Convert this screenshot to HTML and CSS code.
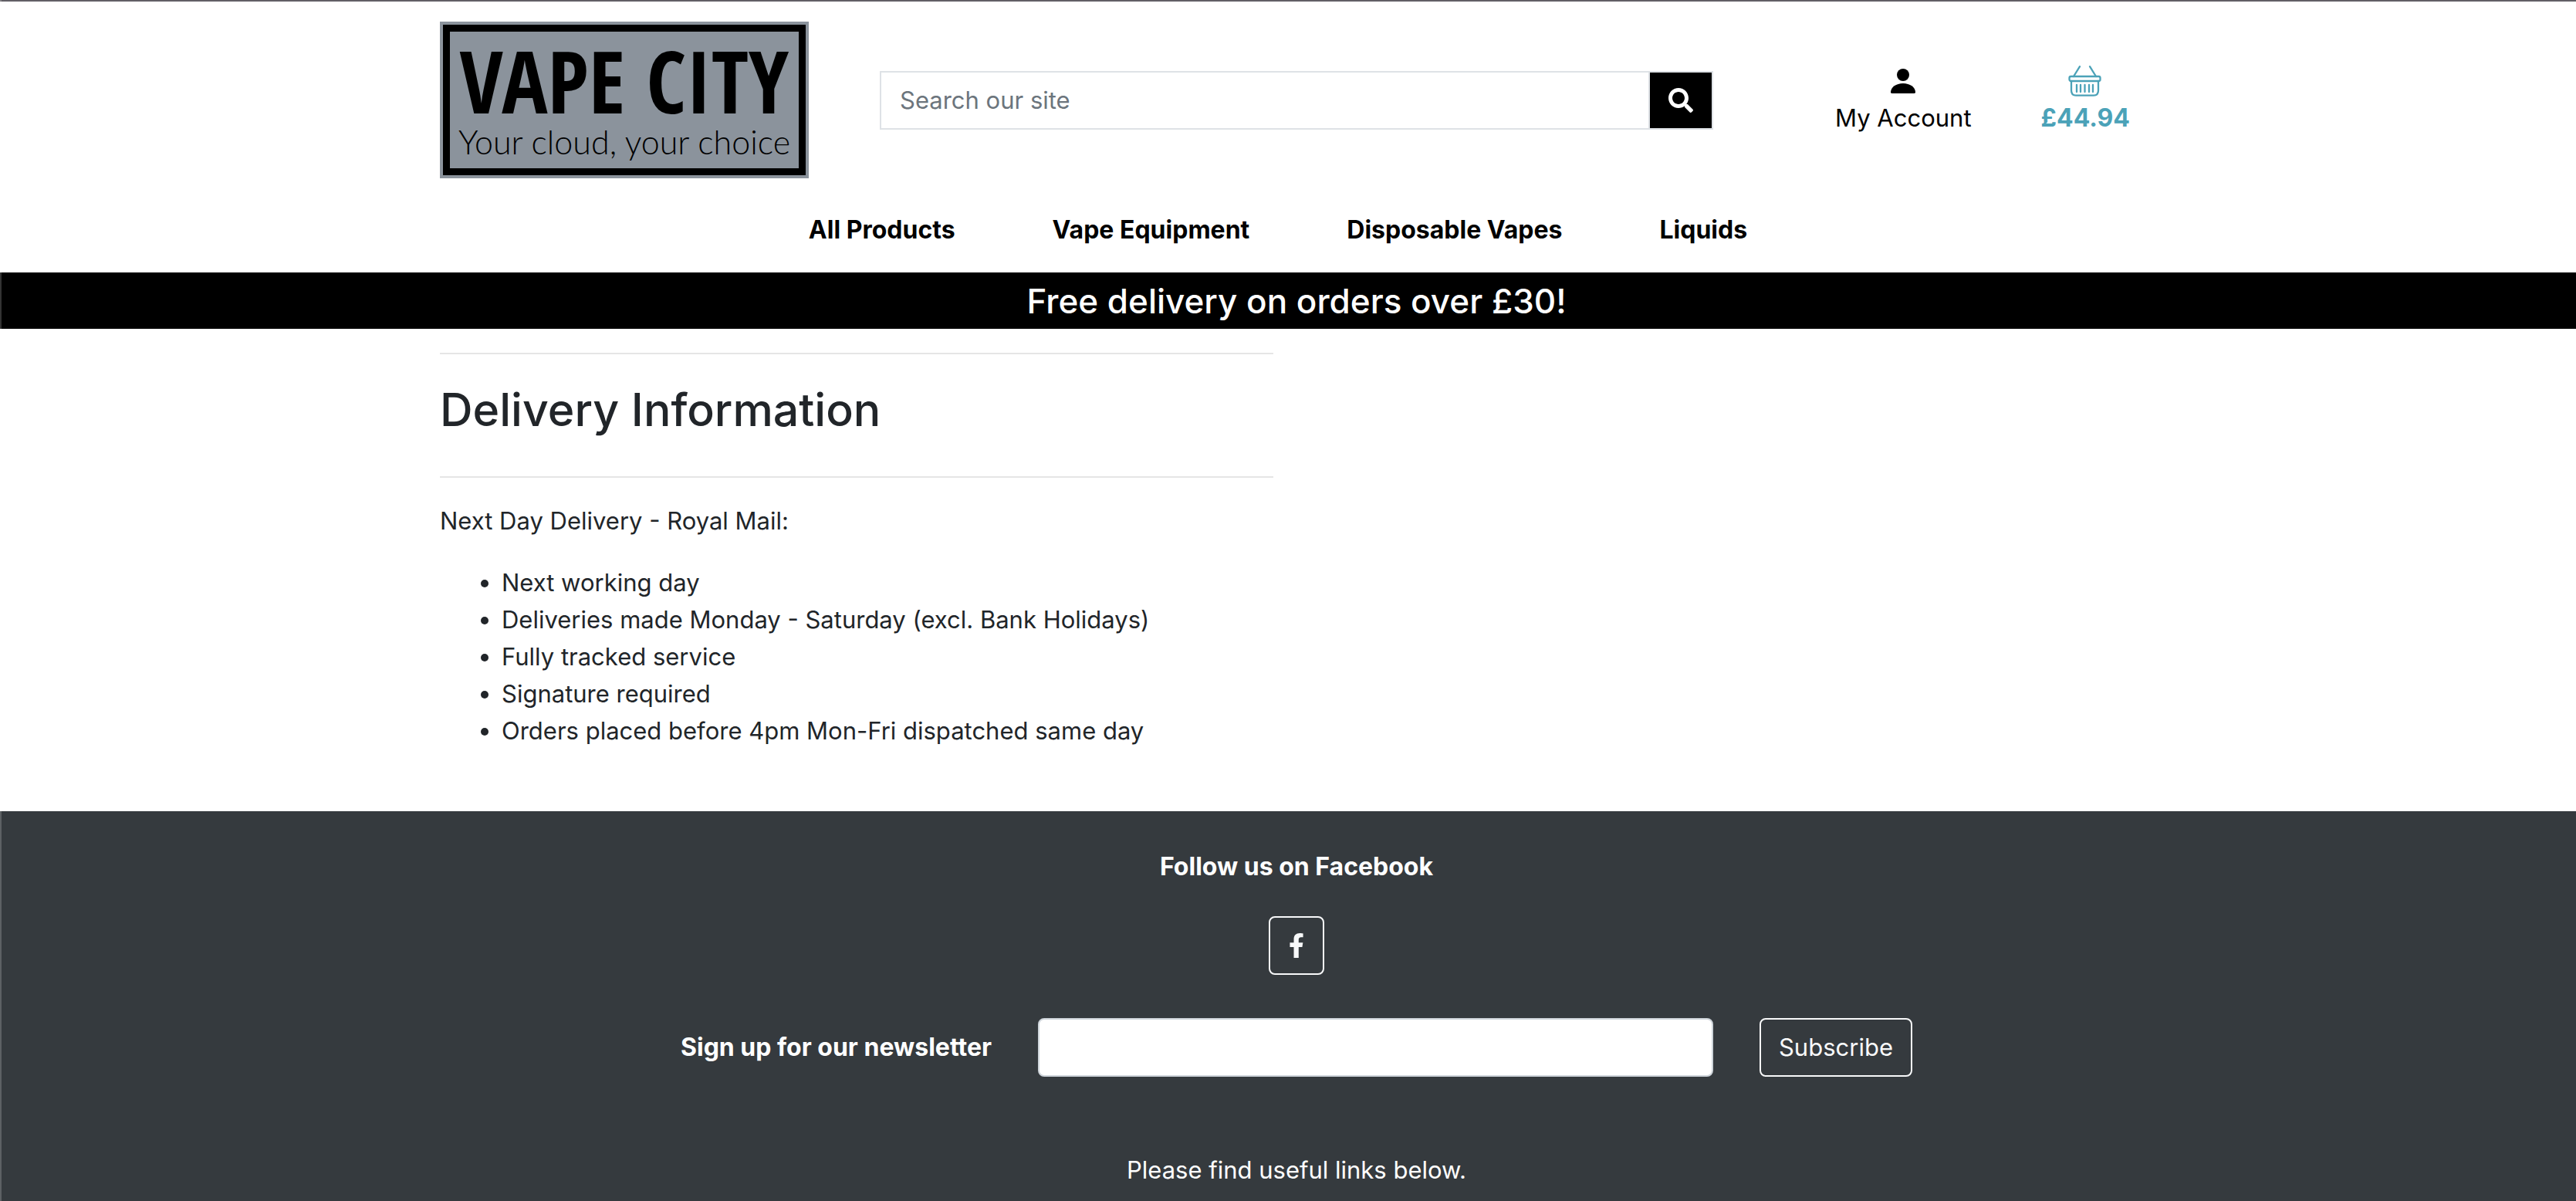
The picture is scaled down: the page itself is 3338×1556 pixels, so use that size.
FILE: index.html
```html
<!DOCTYPE html>
<html lang="en">
<head>
<meta charset="utf-8">
<title>Vape City - Delivery Information</title>
<link rel="stylesheet" href="styles.css">
</head>
<body>
<header class="header">
  <div class="container header-row">
    <a class="logo" href="#" aria-label="Vape City home">
      <span class="logo-name">VAPE CITY</span>
      <span class="logo-tagline">Your cloud, your choice</span>
    </a>
    <form class="search">
      <input class="search-input" type="text" placeholder="Search our site" aria-label="Search our site">
      <button class="search-button" type="button" aria-label="Search">
        <svg class="search-icon" viewBox="0 0 512 512" aria-hidden="true"><path fill="currentColor" d="M505 442.700L405.300 343c-4.500-4.500-10.600-7-17-7H372c27.600-35.300 44-79.700 44-128C416 93.100 322.900 0 208 0S0 93.100 0 208s93.100 208 208 208c48.300 0 92.700-16.400 128-44v16.300c0 6.400 2.500 12.500 7 17l99.700 99.700c9.400 9.400 24.600 9.400 33.900 0l28.300-28.300c9.400-9.400 9.400-24.600.1-34zM208 336c-70.700 0-128-57.200-128-128 0-70.700 57.200-128 128-128 70.700 0 128 57.200 128 128 0 70.700-57.200 128-128 128z"/></svg>
      </button>
    </form>
    <div class="user-links">
      <a class="user-link" href="#">
        <svg class="person-icon" viewBox="0 0 32 32" aria-hidden="true"><circle cx="16" cy="8" r="8"/><path d="M2 32Q0 32 0 30.500C0 24 7 19 16 19S32 24 32 30.500Q32 32 30 32Z"/></svg>
        <span>My Account</span>
      </a>
      <a class="user-link basket" href="#">
        <svg class="basket-icon" viewBox="0 0 44 40" aria-hidden="true"><g fill="none" stroke="currentColor" stroke-width="2.300" stroke-linecap="round" stroke-linejoin="round"><path d="M15 1.200L7 14M28 1.200L36 14"/><rect x="1.500" y="14" width="40" height="6" rx="2"/><path d="M4 20V32Q4 38.700 10 38.700H33Q39 38.700 39 32V20M11 25V34M16 25V34M21.500 25V34M27 25V34M32 25V34"/></g></svg>
        <span>£44.94</span>
      </a>
    </div>
  </div>
  <nav class="nav" aria-label="Products">
    <a href="#">All Products</a>
    <a href="#">Vape Equipment</a>
    <a href="#">Disposable Vapes</a>
    <a href="#">Liquids</a>
  </nav>
</header>
<div class="banner"><h4>Free delivery on orders over £30!</h4></div>
<main class="container main">
  <section class="info">
    <hr>
    <h2>Delivery Information</h2>
    <hr>
    <p>Next Day Delivery - Royal Mail:</p>
    <ul>
      <li>Next working day</li>
      <li>Deliveries made Monday - Saturday (excl. Bank Holidays)</li>
      <li>Fully tracked service</li>
      <li>Signature required</li>
      <li>Orders placed before 4pm Mon-Fri dispatched same day</li>
    </ul>
  </section>
</main>
<footer class="footer">
  <p class="follow">Follow us on Facebook</p>
  <a class="outline-button facebook" href="#" aria-label="Facebook">
    <svg class="facebook-icon" viewBox="0 0 320 512" aria-hidden="true"><path fill="currentColor" d="M279.140 288l14.220-92.660h-88.910v-60.130c0-25.350 12.420-50.060 52.240-50.060h40.420V6.260S260.430 0 225.360 0c-73.220 0-121.080 44.380-121.080 124.720v70.620H22.890V288h81.390v224h100.170V288z"/></svg>
  </a>
  <form class="newsletter">
    <label for="email">Sign up for our newsletter</label>
    <input id="email" class="newsletter-input" type="email">
    <button class="outline-button subscribe" type="button">Subscribe</button>
  </form>
  <p>Please find useful links below.</p>
</footer>
</body>
</html>
```

FILE: styles.css
```css
* {
  box-sizing: border-box;
}

body {
  margin: 0;
  border-top: 2px solid #625f66;
  background: #fff;
  color: #212529;
  font: 400 31px/48px Inter, "Liberation Sans", sans-serif;
}

/* light window edge over the left side of the page */
body::before {
  content: "";
  position: fixed;
  inset: 0 auto 0 0;
  width: 2px;
  background: rgba(255, 255, 255, 0.2);
}

a {
  color: #000;
  text-decoration: none;
}

h2,
h4,
p,
ul {
  margin: 0;
}

input,
button {
  font: inherit;
}

.header,
.banner,
.main,
.footer {
  padding-left: 22px;
}

.container {
  width: 100%;
  max-width: 2242px;
  margin: 0 auto;
}

.header-row {
  display: grid;
  grid-template-columns: 478px 1fr 540px;
  align-items: center;
  max-width: 2220px;
  padding-top: 26px;
}

.logo {
  display: flex;
  flex-direction: column;
  align-items: center;
  height: 203px;
  padding-top: 4px;
  border: 4px solid #8b939c;
  outline: 9px solid #000;
  outline-offset: -13px;
  background: #8b939c;
  white-space: nowrap;
}

.logo-name {
  font: 700 111px/136px "Open Sans Condensed", "Noto Sans Condensed", "Liberation Sans Narrow", "Liberation Sans", sans-serif;
}

.logo-tagline {
  font: 300 43px/24px Lato, sans-serif;
}

.search {
  display: flex;
  height: 76px;
  margin: 0 30px 0 92px;
  border: 2px solid #dee2e6;
}

.search-input {
  flex: 1;
  min-width: 0;
  padding: 0 24px;
  border: 0;
  border-right: 2px solid #dee2e6;
  background: #fff;
}

.search-input::placeholder {
  color: #6c757d;
  opacity: 1;
}

.search-button {
  display: flex;
  align-items: center;
  justify-content: center;
  width: 80px;
  padding: 0;
  border: 0;
  background: #000;
  color: #fff;
}

.search-icon {
  width: 32px;
  height: 32px;
}

.user-links {
  display: flex;
  justify-content: center;
  gap: 90px;
  padding-top: 3px;
  padding-left: 98px;
}

.user-link {
  display: flex;
  flex-direction: column;
  align-items: center;
  gap: 4px;
  white-space: nowrap;
}

.person-icon {
  width: 32px;
  height: 32px;
  margin: 4px;
}

.basket {
  color: #4ba2b8;
  font-size: 32px;
  font-weight: 700;
}

.basket-icon {
  width: 44px;
  height: 40px;
}

.nav {
  display: flex;
  justify-content: center;
  gap: 126px;
  padding: 43px 48px 31px 0;
  font-size: 32px;
  font-weight: 700;
}

.banner {
  padding-top: 8px;
  padding-bottom: 7px;
  background: #000;
  color: #fff;
  text-align: center;
}

h4 {
  font-size: 44px;
  font-weight: 500;
  line-height: 58px;
}

.info {
  width: 1080px;
  max-width: 100%;
  padding: 31px 0 80px;
}

.info hr {
  height: 2px;
  margin: 0;
  border: 0;
  background: #e5e5e5;
}

h2 {
  padding: 34px 0 48px;
  font-size: 59px;
  font-weight: 500;
  line-height: 76px;
}

.info p {
  margin: 32px 0;
}

.info ul {
  padding-left: 80px;
}

.footer {
  display: flex;
  flex-direction: column;
  align-items: center;
  padding-top: 48px;
  padding-bottom: 16px;
  background: #353a3e;
  color: #fff;
}

.follow {
  font-size: 32px;
  font-weight: 700;
}

.outline-button {
  display: flex;
  align-items: center;
  justify-content: center;
  height: 76px;
  border: 2px solid #f8f9fa;
  border-radius: 8px;
  background: transparent;
  color: #f8f9fa;
}

.facebook {
  width: 72px;
  margin: 40px 0 56px;
}

.facebook-icon {
  width: 20px;
  height: 32px;
}

.newsletter {
  display: flex;
  align-items: center;
  gap: 60px;
  margin-bottom: 97px;
}

.newsletter label {
  font-size: 32px;
  font-weight: 700;
}

.newsletter-input {
  width: 875px;
  height: 76px;
  padding: 0 24px;
  border: 2px solid #ced4da;
  border-radius: 8px;
  background: #fff;
}

.subscribe {
  width: 198px;
  padding: 0;
}
```
